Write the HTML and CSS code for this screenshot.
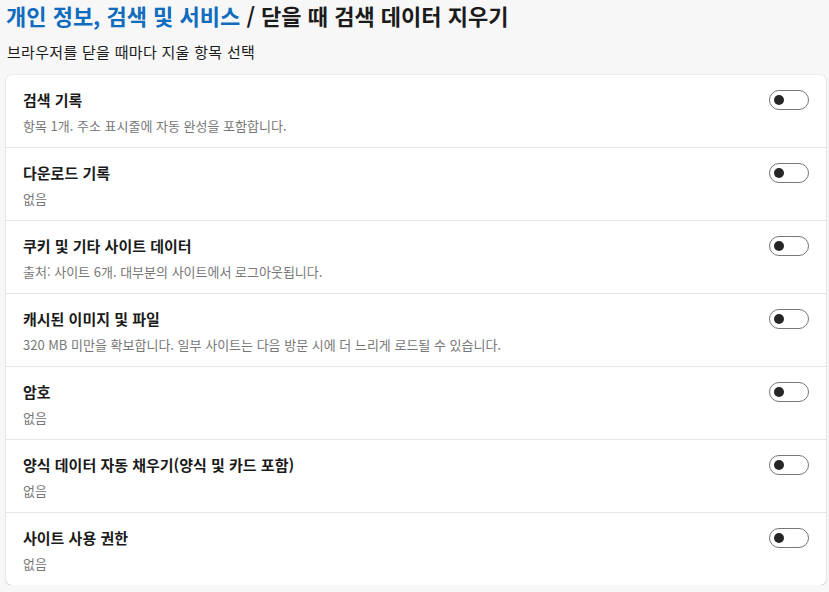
FILE: index.html
```html
<!DOCTYPE html>
<html lang="ko">
<head>
<meta charset="utf-8">
<link rel="stylesheet" href="styles.css">
</head>
<body>
<div class="page">
  <h1 class="title"><span class="crumb">개인 정보, 검색 및 서비스</span> / 닫을 때 검색 데이터 지우기</h1>
  <p class="lead">브라우저를 닫을 때마다 지울 항목 선택</p>
  <div class="card">
    <div class="row">
      <div class="text"><div class="name">검색 기록</div><div class="desc">항목 1개. 주소 표시줄에 자동 완성을 포함합니다.</div></div>
      <span class="toggle"></span>
    </div>
    <div class="row">
      <div class="text"><div class="name">다운로드 기록</div><div class="desc">없음</div></div>
      <span class="toggle"></span>
    </div>
    <div class="row">
      <div class="text"><div class="name">쿠키 및 기타 사이트 데이터</div><div class="desc">출처: 사이트 6개. 대부분의 사이트에서 로그아웃됩니다.</div></div>
      <span class="toggle"></span>
    </div>
    <div class="row">
      <div class="text"><div class="name">캐시된 이미지 및 파일</div><div class="desc">320 MB 미만을 확보합니다. 일부 사이트는 다음 방문 시에 더 느리게 로드될 수 있습니다.</div></div>
      <span class="toggle"></span>
    </div>
    <div class="row">
      <div class="text"><div class="name">암호</div><div class="desc">없음</div></div>
      <span class="toggle"></span>
    </div>
    <div class="row">
      <div class="text"><div class="name">양식 데이터 자동 채우기(양식 및 카드 포함)</div><div class="desc">없음</div></div>
      <span class="toggle"></span>
    </div>
    <div class="row">
      <div class="text"><div class="name">사이트 사용 권한</div><div class="desc">없음</div></div>
      <span class="toggle"></span>
    </div>
  </div>
</div>
</body>
</html>
```
FILE: styles.css
```css
* { box-sizing: border-box; }
html, body { margin: 0; padding: 0; background: #f7f7f7; }
body {
  font-family: "Noto Sans CJK KR", "Noto Sans", sans-serif;
  color: #1a1a1a;
}
.page { padding: 2px 3px 0 6px; }
.title {
  margin: 0;
  font-size: 22px;
  line-height: 26px;
  font-weight: 700;
  color: #1b1b1b;
}
.crumb { color: #0f6cbd; }
.lead {
  margin: 14px 0 0 1px;
  font-size: 15px;
  line-height: 20px;
  letter-spacing: 0.3px;
  color: #1b1b1b;
}
.card {
  margin-top: 13px;
  background: #fff;
  border-radius: 6px;
  box-shadow: 0 0 2px rgba(0,0,0,0.12), 0 1px 2px rgba(0,0,0,0.14);
}
.row {
  display: flex;
  align-items: flex-start;
  justify-content: space-between;
  height: 73px;
  padding: 15px 17px 0 17px;
  border-top: 1px solid #e5e5e5;
}
.row:first-child { border-top: none; height: 72px; }
.name { font-size: 15px; line-height: 20px; font-weight: 600; color: #1b1b1b; }
.desc { margin-top: 8px; font-size: 13px; line-height: 16px; color: #777777; }
.toggle {
  position: relative;
  margin-top: 0;
  width: 40px;
  height: 20px;
  border: 1px solid #767676;
  border-radius: 10px;
  flex: none;
}
.toggle::after {
  content: "";
  position: absolute;
  left: 4px;
  top: 4px;
  width: 10px;
  height: 10px;
  border-radius: 50%;
  background: #262626;
}
```
